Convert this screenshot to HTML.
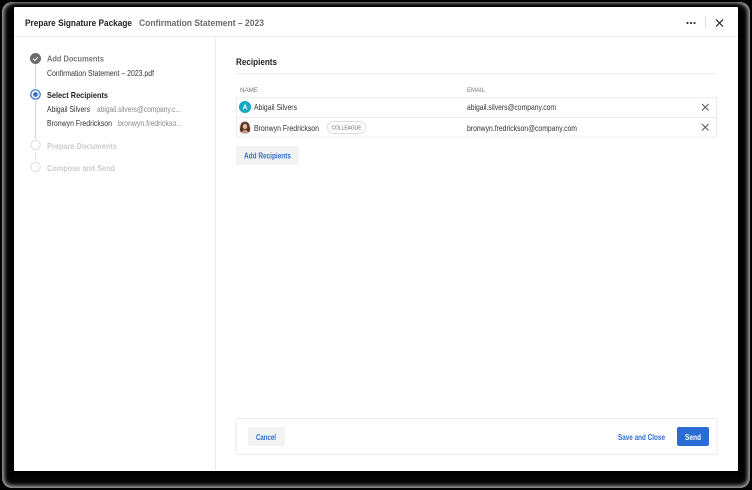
<!DOCTYPE html>
<html><head><meta charset="utf-8"><style>
html,body{margin:0;padding:0;width:752px;height:490px;overflow:hidden;background:#000}
#ring{position:absolute;left:2px;top:2px;width:748px;height:486px;border-radius:10px;background:#040404;box-shadow:inset 0 0 4px 2px rgba(255,255,255,.7)}
#modal{position:absolute;left:14px;top:7px;width:724px;height:464px;background:#fff;border-radius:1px;box-shadow:0 0 5px 3px #000}
svg{position:absolute;left:0;top:0;filter:blur(.25px)}
text{font-family:"Liberation Sans",sans-serif;font-size:8.5px;fill:#333}
.b{font-weight:700}
</style></head><body>
<div id="ring"></div><div id="modal"></div>
<svg width="752" height="490" viewBox="0 0 752 490" xmlns="http://www.w3.org/2000/svg">
<g fill="#ececec">
<rect x="14" y="36" width="724" height="1"/>
<rect x="215" y="37" width="1" height="434"/>
<rect x="236" y="73" width="481" height="1"/>
</g>
<text x="25" y="26" class="b" style="font-size:9.5px;fill:#222" textLength="107" lengthAdjust="spacingAndGlyphs">Prepare Signature Package</text>
<text x="139" y="26" class="b" style="font-size:9.5px;fill:#6a6a6a" textLength="125" lengthAdjust="spacingAndGlyphs">Confirmation Statement – 2023</text>
<g fill="#333"><circle cx="687.500" cy="23" r="1.100"/><circle cx="691" cy="23" r="1.100"/><circle cx="694.500" cy="23" r="1.100"/></g>
<rect x="705" y="17" width="1" height="11" fill="#ddd"/>
<path d="M716 19.500l7 7m0-7l-7 7" stroke="#222" stroke-width="1.200" fill="none"/>

<path d="M35.500 64V88M35.500 101V139" stroke="#d5d5d5" stroke-width="1"/>
<path d="M35.500 152V161" stroke="#e2e2e2" stroke-width="1"/>
<circle cx="35.500" cy="58.500" r="5.500" fill="#6b6b6b"/>
<path d="M33 58.700l1.800 1.800 3.200-3.400" stroke="#fff" stroke-width="1" fill="none"/>
<circle cx="35.500" cy="94.500" r="4.700" fill="#fff" stroke="#2f6fce" stroke-width="1.200"/>
<circle cx="35.500" cy="94.500" r="2.400" fill="#2f6fce"/>
<circle cx="35.500" cy="145" r="4.700" fill="#fff" stroke="#dcdcdc" stroke-width="1"/>
<circle cx="35.500" cy="167" r="4.700" fill="#fff" stroke="#dcdcdc" stroke-width="1"/>

<text x="47" y="61.500" class="b" style="font-size:8.500px;fill:#777" textLength="57" lengthAdjust="spacingAndGlyphs">Add Documents</text>
<text x="47" y="76" style="font-size:8px;fill:#333" textLength="107" lengthAdjust="spacingAndGlyphs">Confirmation Statement – 2023.pdf</text>
<text x="47" y="98" class="b" style="font-size:8.500px;fill:#222" textLength="61" lengthAdjust="spacingAndGlyphs">Select Recipients</text>
<text x="47" y="112" style="font-size:8px" textLength="43" lengthAdjust="spacingAndGlyphs">Abigail Silvers</text>
<text x="97" y="112" style="font-size:8px;fill:#888" textLength="84" lengthAdjust="spacingAndGlyphs">abigail.silvers@company.c...</text>
<text x="47" y="126" style="font-size:8px" textLength="65" lengthAdjust="spacingAndGlyphs">Bronwyn Fredrickson</text>
<text x="118" y="126" style="font-size:8px;fill:#888" textLength="64" lengthAdjust="spacingAndGlyphs">bronwyn.fredrickso...</text>
<text x="47" y="149" class="b" style="font-size:8.500px;fill:#ccc" textLength="70" lengthAdjust="spacingAndGlyphs">Prepare Documents</text>
<text x="47" y="171" class="b" style="font-size:8.500px;fill:#ccc" textLength="68" lengthAdjust="spacingAndGlyphs">Compose and Send</text>

<text x="236" y="65" class="b" style="font-size:9.500px;fill:#222" textLength="41" lengthAdjust="spacingAndGlyphs">Recipients</text>
<text x="240" y="92" style="font-size:6px;fill:#777" textLength="18" lengthAdjust="spacingAndGlyphs">NAME</text>
<text x="467" y="92" style="font-size:6px;fill:#777" textLength="18" lengthAdjust="spacingAndGlyphs">EMAIL</text>
<rect x="236.500" y="97.500" width="480" height="39.500" rx="1" fill="#fff" stroke="#ececec"/>
<rect x="237" y="117" width="479" height="1" fill="#ececec"/>
<circle cx="245" cy="107" r="6" fill="#16a5c2"/>
<text x="245" y="109.700" text-anchor="middle" class="b" style="font-size:7px;fill:#fff">A</text>
<circle cx="245" cy="127.500" r="6" fill="#e9dcd2"/>
<path d="M239.800 130.500c.6-5 .8-8.700 5.200-8.900 4.400.2 4.600 4 5.200 8.900-1.400 2-2.400 2.800-5.200 3-2.800-.2-3.800-1-5.200-3z" fill="#5b3328"/>
<ellipse cx="245" cy="126.500" rx="2.200" ry="2.700" fill="#e3b8a0"/>
<path d="M241.600 133c.8-2.400 2-3 3.400-3s2.600.6 3.400 3c-1 .5-2 .6-3.400.6s-2.400-.1-3.400-.6z" fill="#c69a86"/>
<text x="254" y="110" style="font-size:8.500px" textLength="43" lengthAdjust="spacingAndGlyphs">Abigail Silvers</text>
<text x="254" y="131" style="font-size:8.500px" textLength="65" lengthAdjust="spacingAndGlyphs">Bronwyn Fredrickson</text>
<rect x="327.500" y="121.500" width="38" height="12" rx="6" fill="#fff" stroke="#ddd"/>
<text x="331.500" y="129.700" style="font-size:5.500px;fill:#666" textLength="30" lengthAdjust="spacingAndGlyphs">COLLEAGUE</text>
<text x="467" y="110" style="font-size:8.500px" textLength="89" lengthAdjust="spacingAndGlyphs">abigail.silvers@company.com</text>
<text x="467" y="131" style="font-size:8.500px" textLength="110" lengthAdjust="spacingAndGlyphs">bronwyn.fredrickson@company.com</text>
<path d="M702 104l6.500 6.500m0-6.500l-6.500 6.500M702 124l6.500 6.500m0-6.500l-6.500 6.500" stroke="#555" stroke-width="1" fill="none"/>
<rect x="236" y="146" width="63" height="19" rx="1" fill="#f3f3f3"/>
<text x="244" y="158.500" class="b" style="font-size:8.200px;fill:#2f6fce" textLength="47" lengthAdjust="spacingAndGlyphs">Add Recipients</text>

<rect x="236" y="418.500" width="481" height="36" rx="2" fill="#fff" stroke="#e9e9e9"/>
<rect x="248" y="427" width="37" height="19" rx="1" fill="#f3f3f3"/>
<text x="256" y="440" class="b" style="font-size:8.200px;fill:#2f6fce" textLength="20" lengthAdjust="spacingAndGlyphs">Cancel</text>
<text x="618" y="440" class="b" style="font-size:8.200px;fill:#2f6fce" textLength="47" lengthAdjust="spacingAndGlyphs">Save and Close</text>
<rect x="677" y="427" width="32" height="19" rx="2" fill="#2b6cd4"/>
<text x="685" y="440" class="b" style="font-size:8.200px;fill:#fff" textLength="16" lengthAdjust="spacingAndGlyphs">Send</text>
</svg>
</body></html>
